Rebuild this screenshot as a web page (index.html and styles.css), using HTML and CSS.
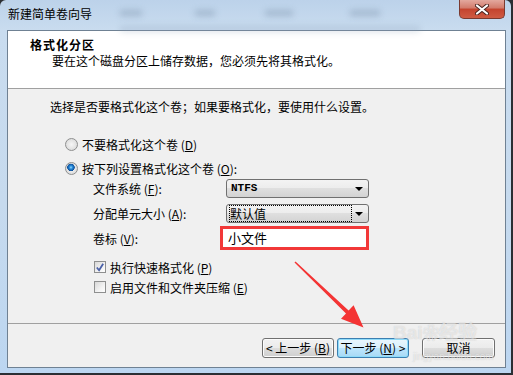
FILE: index.html
```html
<!DOCTYPE html>
<html lang="zh-CN">
<head>
    <meta charset="UTF-8">
    <title>新建简单卷向导</title>
    <link rel="stylesheet" href="styles.css">
</head>
<body>
    <div class="window">
        <div class="titlebar">
            <span class="blur b1"></span>
            <span class="blur b2"></span>
            <span class="blur b3"></span>
            <span class="blur b4"></span>
            <span class="blur b5"></span>
            <span class="title">新建简单卷向导</span>
            <span class="close">
                <svg width="14" height="11" viewBox="0 0 14 11">
                    <path d="M2 1.5 L12 9.5 M12 1.5 L2 9.5" stroke="#4a2420" stroke-width="4" stroke-linecap="round"/>
                    <path d="M2 1.5 L12 9.5 M12 1.5 L2 9.5" stroke="#fff" stroke-width="2.2" stroke-linecap="round"/>
                </svg>
            </span>
        </div>

        <div class="client">
            <div class="header">
                <div class="heading">格式化分区</div>
                <div class="subheading">要在这个磁盘分区上储存数据，您必须先将其格式化。</div>
            </div>

            <div class="content">
                <p class="intro">选择是否要格式化这个卷；如果要格式化，要使用什么设置。</p>

                <div class="option first"><span class="radio"></span>不要格式化这个卷 (<u>D</u>)</div>
                <div class="option"><span class="radio checked"></span>按下列设置格式化这个卷 (<u>O</u>):</div>

                <div class="settings">
                    <div class="field">
                        <span class="label">文件系统 (<u>F</u>):</span>
                        <div class="combo"><span class="value ntfs">NTFS</span><i class="drop"></i></div>
                    </div>
                    <div class="field">
                        <span class="label">分配单元大小 (<u>A</u>):</span>
                        <div class="combo"><span class="value focus">默认值</span><i class="drop"></i></div>
                    </div>
                    <div class="field volume">
                        <span class="label">卷标 (<u>V</u>):</span>
                        <div class="textbox">小文件</div>
                    </div>
                </div>

                <div class="check first"><span class="box checked">
                    <svg width="11" height="11" viewBox="0 0 11 11"><path d="M2 5.5 L4.5 8.5 L9 1.5" fill="none" stroke="#4b61a8" stroke-width="2"/></svg>
                </span>执行快速格式化 (<u>P</u>)</div>
                <div class="check"><span class="box"></span>启用文件和文件夹压缩 (<u>E</u>)</div>
            </div>

            <div class="footer">
                <button class="btn">&lt; 上一步 (<u>B</u>)</button>
                <button class="btn default">下一步 (<u>N</u>) &gt;</button>
                <button class="btn cancel">取消</button>
            </div>
        </div>

        <svg class="annotation" viewBox="0 0 511 373" width="511" height="373">
            <polygon points="294.5,262.5 295.5,261.5 348.6,310.4 353.6,305.2 363.5,327.5 341,318.8 346,313.6" fill="#f43434"/>
        </svg>

        <div class="watermark">
            <div class="wm-logo">Bai<span class="paw">❀</span>经验</div>
            <div class="wm-url">jingyan.baidu.com</div>
        </div>
    </div>
</body>
</html>
```

FILE: styles.css
```css
* {
    box-sizing: border-box;
}

body {
    margin: 0;
    background: #2b2e33;
    font-family: "Noto Sans CJK SC", "DejaVu Sans", sans-serif;
    font-size: 12px;
    color: #000;
}

u {
    text-decoration: underline;
}

.window {
    position: relative;
    width: 511px;
    height: 373px;
    display: flex;
    flex-direction: column;
    overflow: hidden;
    border-radius: 6px 6px 0 0;
    background: linear-gradient(180deg, #bcd2ea 0, #c9dcef 30px, #c6daee 55%, #bcd6f1 100%);
}

/* title bar */
.titlebar {
    position: relative;
    height: 30px;
    display: flex;
    align-items: flex-start;
    justify-content: space-between;
    padding-left: 8px;
}

.blur {
    position: absolute;
    height: 6px;
    background: #8aa0b8;
    filter: blur(3px);
    opacity: 0.55;
}

.b1 { left: 120px; top: 10px; width: 22px; }
.b2 { left: 195px; top: 10px; width: 20px; }
.b3 { left: 265px; top: 10px; width: 28px; }
.b4 { left: 350px; top: 10px; width: 30px; }
.b5 { left: 120px; top: 26px; width: 300px; opacity: 0.3; }

.title {
    position: relative;
    margin-top: 6px;
    line-height: 16px;
}

.close {
    position: relative;
    width: 46px;
    height: 19px;
    margin-right: 6px;
    display: flex;
    align-items: center;
    justify-content: center;
    border: 1px solid #7a3a30;
    border-top: none;
    border-radius: 0 0 5px 5px;
    background: linear-gradient(180deg, #e3a89e 0, #d27a6b 45%, #c4432e 50%, #cf5b43 100%);
}

/* client area */
.client {
    flex: 1;
    margin: 0 5px 5px 7px;
    display: flex;
    flex-direction: column;
    border: 1px solid #6f8193;
    background: #f0f0f0;
}

.header {
    height: 58px;
    padding: 6px 0 0 22px;
    background: #fff;
    border-bottom: 1px solid #a0a0a0;
}

.heading {
    font-weight: bold;
    line-height: 16px;
    letter-spacing: 1px;
}

.subheading {
    line-height: 16px;
    padding-left: 22px;
}

.content {
    flex: 1;
    padding-top: 10px;
}

.intro {
    margin: 0 0 0 42px;
    line-height: 16px;
}

.option {
    display: flex;
    align-items: center;
    height: 20px;
    margin: 4px 0 0 57px;
}

.option.first {
    margin-top: 19px;
}

.radio {
    width: 13px;
    height: 13px;
    margin-right: 4px;
    border: 1px solid #8e8f8f;
    border-radius: 50%;
    background: radial-gradient(circle at 50% 50%, #f6f6f6 0, #e2e2e2 60%, #cfcfcf 100%);
}

.radio.checked {
    background:
        radial-gradient(circle at 45% 40%, #9be0fb 0, #2b8fe0 1.5px, #0d4f99 3.5px, transparent 4px),
        radial-gradient(circle at 50% 50%, #f6f6f6 0, #e2e2e2 60%, #cfcfcf 100%);
}

.settings {
    margin: 1px 0 0 85px;
}

.field {
    display: flex;
    align-items: center;
    height: 19px;
    margin-bottom: 6px;
}

.label {
    width: 133px;
}

.combo {
    width: 143px;
    height: 19px;
    display: flex;
    align-items: center;
    justify-content: space-between;
    padding: 0 5px 0 3px;
    border: 1px solid #707070;
    border-radius: 3px;
    background: linear-gradient(180deg, #f3f3f3 0, #ececec 50%, #dfdfdf 50%, #d3d3d3 100%);
}

.value {
    line-height: 15px;
}

.value.ntfs {
    padding-left: 1px;
    font-family: "Liberation Mono", monospace;
    font-weight: bold;
    font-size: 11px;
}

.value.focus {
    width: 121px;
    outline: 1px dotted #000;
}

.drop {
    width: 0;
    height: 0;
    border-left: 4px solid transparent;
    border-right: 4px solid transparent;
    border-top: 4px solid #000;
}

.field.volume {
    height: 24px;
    margin-top: -3px;
    margin-bottom: 0;
}

.field.volume .label {
    width: 127px;
}

.textbox {
    width: 149px;
    height: 24px;
    padding-left: 5px;
    line-height: 18px;
    font-size: 13px;
    background: #fff;
    border: 3px solid #f23838;
}

.check {
    display: flex;
    align-items: center;
    height: 20px;
    margin-left: 86px;
}

.check.first {
    margin-top: 7px;
}

.box {
    width: 12px;
    height: 12px;
    margin-right: 4px;
    display: flex;
    align-items: center;
    justify-content: center;
    border: 1px solid #8e8f8f;
    background: linear-gradient(135deg, #d8d8d8 0, #f2f2f2 60%, #fff 100%);
}

/* buttons */
.footer {
    height: 44px;
    display: flex;
    justify-content: flex-end;
    padding: 14px 10px 0 0;
    border-top: 1px solid #a0a0a0;
}

.btn {
    width: 72px;
    height: 20px;
    margin-left: 3px;
    padding: 0;
    font-family: "Noto Sans CJK SC", sans-serif;
    font-size: 12px;
    line-height: 16px;
    color: #000;
    border: 1px solid #707070;
    border-radius: 3px;
    background: linear-gradient(180deg, #f2f2f2 0, #ebebeb 50%, #dddddd 50%, #cfcfcf 100%);
    box-shadow: inset 0 0 0 1px #fcfcfc;
}

.btn.default {
    border-color: #3c7fb1;
    background: linear-gradient(180deg, #eaf6fd 0, #d9f0fc 50%, #bee6fd 50%, #a7d9f5 100%);
    box-shadow: inset 0 0 0 1px #8fdcfa;
}

.btn.cancel {
    width: 73px;
    margin-left: 13px;
}

/* overlays */
.annotation {
    position: absolute;
    left: 0;
    top: 0;
    pointer-events: none;
}

.watermark {
    position: absolute;
    left: 393px;
    top: 322px;
    width: 112px;
    color: rgba(255, 255, 255, 0.55);
    text-shadow: 0 0 1px rgba(120, 120, 120, 0.35);
    pointer-events: none;
}

.wm-logo {
    font-family: "Liberation Sans", sans-serif;
    font-size: 19px;
    font-weight: bold;
    line-height: 22px;
}

.paw {
    font-size: 16px;
}

.wm-url {
    margin-top: 6px;
    padding-left: 20px;
    font-family: "Liberation Sans", sans-serif;
    font-size: 10px;
}
```
